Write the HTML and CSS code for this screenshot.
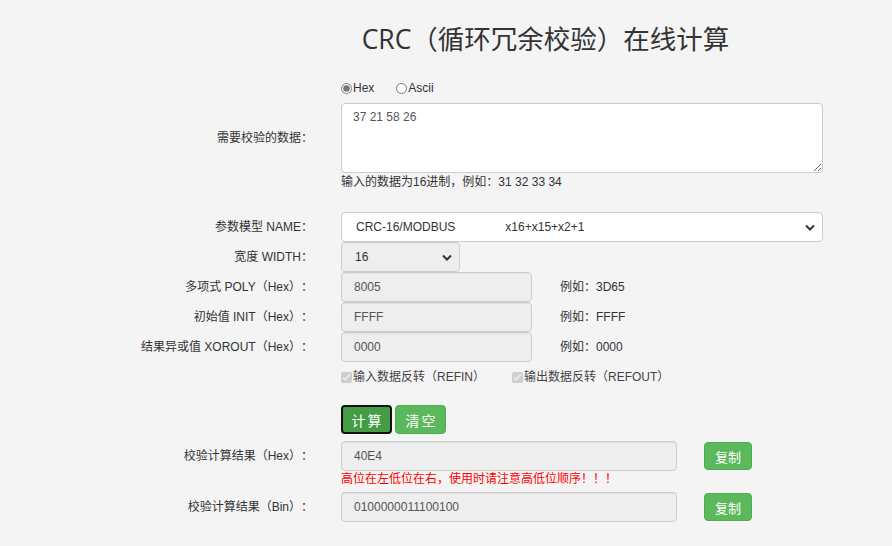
FILE: index.html
```html
<!DOCTYPE html>
<html lang="zh">
<head>
  <meta charset="UTF-8">
  <title>CRC（循环冗余校验）在线计算</title>
  <link rel="stylesheet" href="styles.css">
</head>
<body>
  <h1 class="title">CRC（循环冗余校验）在线计算</h1>

  <form class="crc-form">
    <div class="row row-radio">
      <div class="lbl"></div>
      <div class="ctl">
        <label class="opt"><input type="radio" name="fmt" checked>Hex</label>
        <label class="opt opt-ascii"><input type="radio" name="fmt">Ascii</label>
      </div>
    </div>

    <div class="row row-data">
      <div class="lbl">需要校验的数据：</div>
      <div class="ctl">
        <textarea class="data">37 21 58 26</textarea>
      </div>
    </div>
    <div class="row row-hint">
      <div class="lbl"></div>
      <div class="ctl hint">输入的数据为16进制，例如：31 32 33 34</div>
    </div>

    <div class="row row-name">
      <div class="lbl">参数模型 NAME：</div>
      <div class="ctl">
        <div class="sel sel-name">
          <span>CRC-16/MODBUS&nbsp;&nbsp;&nbsp;&nbsp;&nbsp;&nbsp;&nbsp;&nbsp;&nbsp;&nbsp;&nbsp;&nbsp;&nbsp;&nbsp;&nbsp;x16+x15+x2+1</span>
          <svg class="chev" width="10" height="7" viewBox="0 0 10 7"><path d="M1 1.5 L5 5.5 L9 1.5" fill="none" stroke="#333" stroke-width="2"/></svg>
        </div>
      </div>
    </div>
    <div class="row">
      <div class="lbl">宽度 WIDTH：</div>
      <div class="ctl">
        <div class="sel sel-width">
          <span>16</span>
          <svg class="chev" width="10" height="7" viewBox="0 0 10 7"><path d="M1 1.5 L5 5.5 L9 1.5" fill="none" stroke="#333" stroke-width="2"/></svg>
        </div>
      </div>
    </div>
    <div class="row">
      <div class="lbl">多项式 POLY（Hex）：</div>
      <div class="ctl">
        <input class="field field-short" value="8005" readonly>
        <span class="eg">例如：3D65</span>
      </div>
    </div>
    <div class="row">
      <div class="lbl">初始值 INIT（Hex）：</div>
      <div class="ctl">
        <input class="field field-short" value="FFFF" readonly>
        <span class="eg">例如：FFFF</span>
      </div>
    </div>
    <div class="row">
      <div class="lbl">结果异或值 XOROUT（Hex）：</div>
      <div class="ctl">
        <input class="field field-short" value="0000" readonly>
        <span class="eg">例如：0000</span>
      </div>
    </div>
    <div class="row row-check">
      <div class="lbl"></div>
      <div class="ctl">
        <label class="chk"><input type="checkbox" checked disabled>输入数据反转（REFIN）</label>
        <label class="chk chk-out"><input type="checkbox" checked disabled>输出数据反转（REFOUT）</label>
      </div>
    </div>

    <div class="row row-btns">
      <div class="lbl"></div>
      <div class="ctl">
        <button type="button" class="btn btn-calc">计算</button>
        <button type="button" class="btn">清空</button>
      </div>
    </div>

    <div class="row row-result">
      <div class="lbl">校验计算结果（Hex）：</div>
      <div class="ctl">
        <input class="field field-long" value="40E4" readonly>
        <button type="button" class="btn btn-copy">复制</button>
      </div>
    </div>
    <div class="row row-warn">
      <div class="lbl"></div>
      <div class="ctl warn">高位在左低位在右，使用时请注意高低位顺序！！！</div>
    </div>
    <div class="row">
      <div class="lbl">校验计算结果（Bin）：</div>
      <div class="ctl">
        <input class="field field-long" value="0100000011100100" readonly>
        <button type="button" class="btn btn-copy">复制</button>
      </div>
    </div>
  </form>
</body>
</html>
```

FILE: styles.css
```css
body {
  margin: 0;
  background: #f4f4f4;
  color: #333;
  font-family: "Liberation Sans", Arial, "Noto Sans CJK SC", sans-serif;
  font-size: 12px;
  line-height: 14px;
  text-spacing-trim: space-all;
}
.title {
  margin: 0;
  padding: 19px 0 0 199px;
  height: 41px;
  line-height: 40px;
  text-align: center;
  font-family: "Open Sans", "Noto Sans CJK SC", sans-serif;
  font-size: 26.5px;
  font-weight: normal;
  color: #333;
}
.crc-form {
  margin-top: 17px;
}
.row {
  display: flex;
  align-items: center;
  min-height: 30px;
}
.lbl {
  width: 313px;
  flex: none;
  text-align: right;
}
.ctl {
  margin-left: 28px;
  display: flex;
  align-items: center;
}
.row-radio {
  min-height: 22px;
  height: 22px;
}
.opt {
  display: flex;
  align-items: center;
}
.opt input {
  margin: 0 1px 0 0;
  width: 11px;
  height: 11px;
  accent-color: #777;
}
.opt-ascii {
  margin-left: 22px;
}
.row-data {
  margin-top: 4px;
}
.data {
  box-sizing: border-box;
  width: 482px;
  height: 70px;
  padding: 6px 11px;
  border: 1px solid #ccc;
  border-radius: 4px;
  background: #fff;
  color: #555;
  font-family: inherit;
  font-size: 12px;
  line-height: 14px;
  resize: vertical;
}
.row-hint {
  min-height: 18px;
  height: 18px;
  align-items: flex-start;
}
.hint {
  padding-top: 2px;
}
.row-name {
  margin-top: 21px;
}
.sel {
  box-sizing: border-box;
  height: 30px;
  display: flex;
  align-items: center;
  justify-content: space-between;
  padding: 0 7px 0 14px;
  border: 1px solid #ccc;
  border-radius: 4px;
  color: #333;
}
.sel-name {
  width: 482px;
  background: #fff;
}
.sel-width {
  width: 119px;
  background: #eee;
  padding-left: 13px;
}
.field {
  box-sizing: border-box;
  height: 30px;
  padding: 0 12px;
  border: 1px solid #ccc;
  border-radius: 4px;
  background: #eee;
  color: #555;
  font-family: inherit;
  font-size: 12px;
  box-shadow: inset 0 1px 1px rgba(0, 0, 0, 0.05);
}
.field-short {
  width: 191px;
}
.field-long {
  width: 336px;
}
.eg {
  margin-left: 28px;
}
.row-check {
  height: 30px;
  color: #444;
}
.chk {
  display: flex;
  align-items: center;
}
.chk input {
  margin: 0 1px 0 0;
  width: 11px;
  height: 11px;
}
.chk-out {
  margin-left: 27px;
}
.row-btns {
  margin-top: 13px;
  min-height: 29px;
}
.btn {
  box-sizing: border-box;
  height: 29px;
  width: 51px;
  border: 1px solid #4cae4c;
  border-radius: 4px;
  background: #5cb85c;
  color: #fff;
  font-family: inherit;
  font-size: 14px;
  letter-spacing: 2px;
  padding: 0 0 0 2px;
  margin-right: 3px;
}
.btn-calc {
  background: #449d44;
  border: 2px solid #111;
}
.btn-copy {
  width: 48px;
  height: 28px;
  margin-left: 27px;
  font-size: 13px;
  letter-spacing: 0;
  padding: 0;
}
.row-result {
  margin-top: 7px;
}
.row-warn {
  min-height: 21px;
  height: 21px;
  align-items: flex-start;
}
.warn {
  color: #f00;
  padding-top: 1px;
}
```
